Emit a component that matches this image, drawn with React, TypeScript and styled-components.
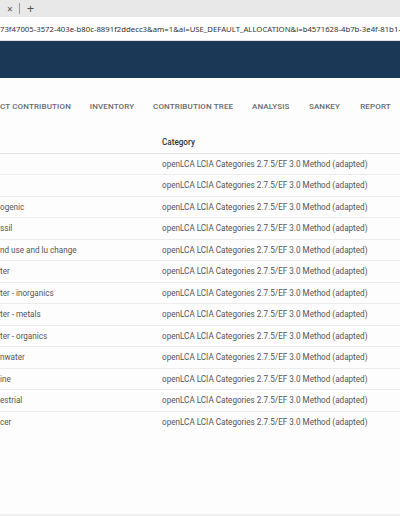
import React from 'react';
import styled, { createGlobalStyle } from 'styled-components';

const GlobalStyle = createGlobalStyle`
  html, body {
    margin: 0;
    padding: 0;
    background: #fdfdfd;
  }
  body {
    font-family: Roboto, "Liberation Sans", sans-serif;
    overflow: hidden;
  }
`;

const tabs = ['CT CONTRIBUTION', 'INVENTORY', 'CONTRIBUTION TREE', 'ANALYSIS', 'SANKEY', 'REPORT'];

const category = 'openLCA LCIA Categories 2.7.5/EF 3.0 Method (adapted)';

const rows = [
  '',
  '',
  'ogenic',
  'ssil',
  'nd use and lu change',
  'ter',
  'ter - inorganics',
  'ter - metals',
  'ter - organics',
  'nwater',
  'ine',
  'estrial',
  'cer',
];

const App: React.FC = () => {
  return (
    <>
      <GlobalStyle />
      <StyledWindow>
        <StyledTabStrip>
          <span className="close">×</span>
          <span className="sep" />
          <span className="plus">+</span>
        </StyledTabStrip>
        <StyledAddressBar>
          73f47005-3572-403e-b80c-8891f2ddecc3&amp;am=1&amp;al=USE_DEFAULT_ALLOCATION&amp;i=b4571628-4b7b-3e4f-81b1-
        </StyledAddressBar>
        <StyledAppBar />
        <StyledTabs>
          {tabs.map((t) => (
            <Tab key={t}>{t}</Tab>
          ))}
        </StyledTabs>
        <StyledTable>
          <HeaderRow>
            <Cell />
            <Cell $head>Category</Cell>
          </HeaderRow>
          {rows.map((name, i) => (
            <Row key={i} $last={i === rows.length - 1}>
              <Cell>{name}</Cell>
              <Cell>{category}</Cell>
            </Row>
          ))}
        </StyledTable>
        <Filler />
        <StyledScrollbar />
      </StyledWindow>
    </>
  );
};

const StyledWindow = styled.div`
  width: 400px;
  height: 516px;
  display: flex;
  flex-direction: column;
  overflow: hidden;
`;

const StyledTabStrip = styled.div`
  height: 17px;
  background: #e8e8e8;
  display: flex;
  align-items: center;
  color: #555;
  font-family: "Noto Sans", sans-serif;
  .close {
    font-size: 10px;
    margin-left: 7px;
    line-height: 1;
  }
  .sep {
    width: 1px;
    height: 11px;
    background: #999;
    margin: 0 7px 0 6px;
  }
  .plus {
    font-size: 13px;
    line-height: 1;
  }
`;

const StyledAddressBar = styled.div`
  height: 23px;
  background: #fff;
  border-bottom: 1px solid #e2e2e2;
  display: flex;
  align-items: center;
  font-family: "Noto Sans", "Open Sans", sans-serif;
  font-size: 7.75px;
  color: #333;
  white-space: nowrap;
  overflow: hidden;
`;

const StyledAppBar = styled.div`
  height: 37px;
  background: #1b3856;
  flex-shrink: 0;
`;

const StyledTabs = styled.div`
  margin-top: 15px;
  height: 26px;
  display: flex;
  align-items: center;
  white-space: nowrap;
  overflow: hidden;
`;

const Tab = styled.div`
  flex-shrink: 0;
  font-size: 8px;
  font-weight: 500;
  letter-spacing: 0.14px;
  color: #6a6a6a;
  padding: 0 9.4px;
  min-width: 51px;
  box-sizing: border-box;
  text-align: center;
  &:first-child {
    padding-left: 0;
    min-width: 0;
  }
`;

const StyledTable = styled.div`
  margin-top: 13px;
  display: flex;
  flex-direction: column;
`;

const HeaderRow = styled.div`
  display: grid;
  grid-template-columns: 162px 1fr;
  height: 21.5px;
  align-items: center;
  border-bottom: 1px solid #e6e6e6;
  box-sizing: border-box;
`;

const Row = styled.div<{ $last?: boolean }>`
  display: grid;
  grid-template-columns: 162px 1fr;
  height: 21.5px;
  align-items: center;
  border-bottom: 1px solid ${({ $last }) => ($last ? 'transparent' : '#ececec')};
  box-sizing: border-box;
`;

const Cell = styled.div<{ $head?: boolean }>`
  font-size: 8.15px;
  font-weight: ${({ $head }) => ($head ? 500 : 400)};
  color: ${({ $head }) => ($head ? '#333' : '#555')};
  white-space: nowrap;
  overflow: hidden;
`;

const Filler = styled.div`
  flex: 1;
`;

const StyledScrollbar = styled.div`
  height: 2px;
  background: #f0f0f0;
`;

export default App;
